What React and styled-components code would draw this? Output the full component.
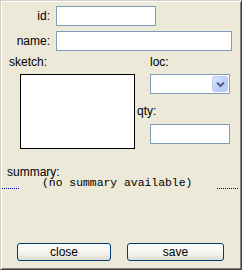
import React from "react";
import styled, { createGlobalStyle } from "styled-components";

const Global = createGlobalStyle`
  html, body { margin: 0; padding: 0; background: #ece9d8; }
  * { box-sizing: border-box; }
`;

const Frame = styled.div`
  width: 242px;
  height: 270px;
  background: #ece9d8;
  border: 1px solid;
  border-color: #d4d0c8 #404040 #404040 #d4d0c8;
  box-shadow: inset 1px 1px #ffffff, inset -1px -1px #808080;
  font-family: "Liberation Sans", Arial, sans-serif;
  font-size: 12px;
  color: #000;
  display: flex;
  flex-direction: column;
`;

const TopGrid = styled.div`
  display: grid;
  grid-template-columns: 49px 176px;
  grid-auto-rows: 20px;
  column-gap: 6px;
  row-gap: 5px;
  padding-top: 5px;
`;

const Label = styled.span`
  display: flex;
  align-items: center;
  justify-content: ${(p) => (p.$right ? "flex-end" : "flex-start")};
  line-height: 14px;
  height: ${(p) => p.$h || 20}px;
  margin-left: ${(p) => p.$ml || 0}px;
  margin-top: ${(p) => p.$mt || 0}px;
`;

const TextBox = styled.input`
  width: ${(p) => p.$w}px;
  height: 20px;
  margin-top: ${(p) => p.$mt || 0}px;
  border: 1px solid #7f9db9;
  background: #fff;
  padding: 0 3px;
  font: inherit;
  outline: none;
`;

const Middle = styled.div`
  display: flex;
  margin-top: 4px;
`;

const LeftCol = styled.div`
  width: 149px;
  padding-left: 8px;
  display: flex;
  flex-direction: column;
`;

const RightCol = styled.div`
  width: 80px;
  display: flex;
  flex-direction: column;
`;

const SketchBox = styled.div`
  width: 115px;
  height: 75px;
  margin: 5px 0 0 11px;
  background: #fff;
  border: 1px solid #000;
`;

const Select = styled.div`
  margin-top: 5px;
  width: 80px;
  height: 20px;
  border: 1px solid #7f9db9;
  background: #fff;
  display: flex;
  justify-content: flex-end;
  padding: 1px;
`;

const DropButton = styled.div`
  width: 16px;
  height: 16px;
  border-radius: 2px;
  background: linear-gradient(135deg, #dce8ff 0%, #c1d3fb 50%, #b4c8f6 100%);
  border: 1px solid #bccdf5;
  display: flex;
  align-items: center;
  justify-content: center;
`;

const Summary = styled.div`
  margin-top: 16px;
  display: flex;
  flex-direction: column;
`;

const MonoText = styled.div`
  font-family: "Liberation Mono", "Courier New", monospace;
  font-size: 11.4px;
  line-height: 12px;
  margin-top: -2px;
  padding-left: 41px;
`;

const DotRow = styled.div`
  display: flex;
  justify-content: space-between;
  margin-top: -1px;
  padding: 0 2px 0 1px;
`;

const Dots = styled.div`
  width: ${(p) => p.$w}px;
  height: 1px;
  background-image: linear-gradient(to right, #0000c0 50%, transparent 50%);
  background-size: 2px 1px;
`;

const ButtonRow = styled.div`
  margin-top: auto;
  margin-bottom: 8px;
  display: flex;
  padding-left: 16px;
  gap: 16px;
`;

const Button = styled.button`
  width: ${(p) => p.$w}px;
  height: 18px;
  border: 1px solid #003c74;
  border-radius: 3px;
  background: linear-gradient(to bottom, #ffffff 0%, #f4f3ee 60%, #dedbcf 100%);
  font-family: "Liberation Sans", Arial, sans-serif;
  font-size: 12px;
  color: #000;
  padding: 0;
  line-height: 14px;
`;

export default function App() {
  return (
    <>
      <Global />
      <Frame>
        <TopGrid>
          <Label $right>id:</Label>
          <TextBox $w={100} />
          <Label $right>name:</Label>
          <TextBox $w={176} />
        </TopGrid>
        <Middle>
          <LeftCol>
            <Label $h={14}>sketch:</Label>
            <SketchBox />
          </LeftCol>
          <RightCol>
            <Label $h={14}>loc:</Label>
            <Select>
              <DropButton>
                <svg width="9" height="7" viewBox="0 0 9 7">
                  <path d="M1 1.5 L4.5 5 L8 1.5" fill="none" stroke="#4d6185" strokeWidth="2" />
                </svg>
              </DropButton>
            </Select>
            <Label $h={14} $ml={-13} $mt={10}>qty:</Label>
            <TextBox $w={80} $mt={6} />
          </RightCol>
        </Middle>
        <Summary>
          <Label $h={14} $ml={6}>summary:</Label>
          <MonoText>(no summary available)</MonoText>
          <DotRow>
            <Dots $w={18} />
            <Dots $w={22} />
          </DotRow>
        </Summary>
        <ButtonRow>
          <Button $w={94}>close</Button>
          <Button $w={97}>save</Button>
        </ButtonRow>
      </Frame>
    </>
  );
}
